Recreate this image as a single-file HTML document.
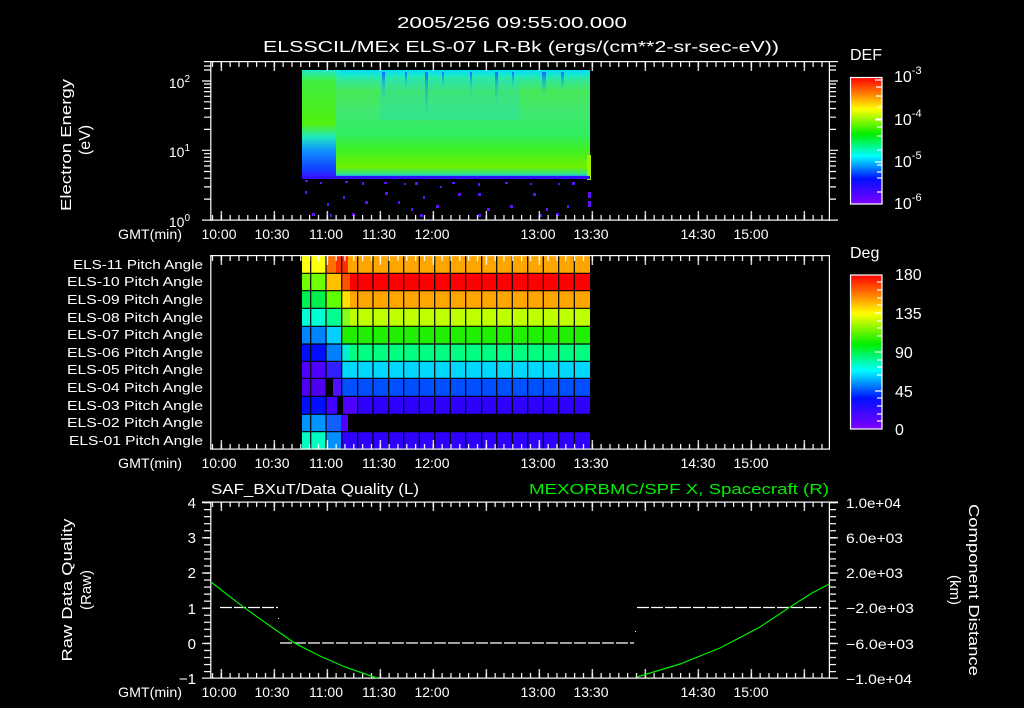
<!DOCTYPE html>
<html><head><meta charset="utf-8"><style>
html,body{margin:0;padding:0;background:#000;}
svg{display:block;}
text{font-family:"Liberation Sans",sans-serif;fill:#fff;}
</style></head><body>
<svg width="1024" height="708" viewBox="0 0 1024 708" xmlns="http://www.w3.org/2000/svg">
<defs>
<pattern id="tminT" patternUnits="userSpaceOnUse" x="220.7" y="0" width="8.8333" height="708"><rect x="0" y="0" width="1.2" height="708" fill="#fff"/></pattern>
<pattern id="tmajT" patternUnits="userSpaceOnUse" x="220.7" y="0" width="53" height="708"><rect x="0" y="0" width="1.2" height="708" fill="#fff"/></pattern>
<pattern id="yminP" patternUnits="userSpaceOnUse" x="0" y="502" width="1024" height="7.04"><rect x="0" y="0" width="1024" height="1.2" fill="#fff"/></pattern>
<pattern id="ymajP" patternUnits="userSpaceOnUse" x="0" y="502" width="1024" height="35.2"><rect x="0" y="0" width="1024" height="1.2" fill="#fff"/></pattern>
<linearGradient id="cbar" x1="0" y1="0" x2="0" y2="1">
<stop offset="0" stop-color="#ff0000"/><stop offset="0.13" stop-color="#ff8000"/><stop offset="0.25" stop-color="#ffff00"/><stop offset="0.45" stop-color="#00ee00"/><stop offset="0.62" stop-color="#00ffff"/><stop offset="0.8" stop-color="#0010ff"/><stop offset="1" stop-color="#8000ff"/></linearGradient>
<linearGradient id="specV" x1="0" y1="0" x2="0" y2="1">
<stop offset="0" stop-color="#10e8e8"/><stop offset="0.08" stop-color="#30e8a0"/><stop offset="0.2" stop-color="#48e858"/><stop offset="0.4" stop-color="#40e870"/><stop offset="0.6" stop-color="#30ee60"/><stop offset="0.75" stop-color="#40f020"/><stop offset="0.9" stop-color="#70f000"/><stop offset="0.96" stop-color="#30e880"/><stop offset="0.985" stop-color="#20a0ff"/><stop offset="1" stop-color="#3020ff"/></linearGradient>
<linearGradient id="specL" x1="0" y1="0" x2="0" y2="1">
<stop offset="0" stop-color="#20e8d0"/><stop offset="0.1" stop-color="#40ee40"/><stop offset="0.5" stop-color="#50f010"/><stop offset="0.62" stop-color="#20e8c0"/><stop offset="0.75" stop-color="#1090ff"/><stop offset="0.92" stop-color="#1040ff"/><stop offset="1" stop-color="#4010ff"/></linearGradient>
<linearGradient id="streak" x1="0" y1="0" x2="0" y2="1"><stop offset="0" stop-color="#1040ff" stop-opacity="0.7"/><stop offset="1" stop-color="#10c0ff" stop-opacity="0"/></linearGradient>
<linearGradient id="cyanS" x1="0" y1="0" x2="0" y2="1"><stop offset="0" stop-color="#00d0ff" stop-opacity="0.7"/><stop offset="1" stop-color="#00ffd0" stop-opacity="0"/></linearGradient>
</defs>

<text x="512" y="28" font-size="16" text-anchor="middle" textLength="230" lengthAdjust="spacingAndGlyphs">2005/256 09:55:00.000</text>
<text x="521" y="52" font-size="16" text-anchor="middle" textLength="516" lengthAdjust="spacingAndGlyphs">ELSSCIL/MEx ELS-07 LR-Bk  (ergs/(cm**2-sr-sec-eV))</text>

<!-- Panel 1 -->
<rect x="302" y="70" width="288" height="108" fill="url(#specV)"/>
<rect x="302" y="70" width="34" height="108" fill="url(#specL)"/>
<rect x="340" y="70" width="250" height="10" fill="url(#cyanS)"/>
<g fill="url(#streak)">
<rect x="425" y="72" width="3" height="50"/><rect x="495" y="72" width="3" height="35"/><rect x="470" y="72" width="2" height="25"/><rect x="382" y="72" width="3" height="30"/><rect x="405" y="72" width="2" height="20"/><rect x="542" y="72" width="4" height="25"/><rect x="561" y="72" width="3" height="20"/><rect x="442" y="72" width="2" height="18"/><rect x="512" y="72" width="2" height="18"/>
</g>
<rect x="380" y="80" width="140" height="40" fill="#20d8e0" opacity="0.25"/>
<rect x="587" y="155" width="4" height="25" fill="#a0f000"/>
<rect x="302" y="176" width="288" height="3" fill="#3010ff"/>
<g fill="#6010ff">
<rect x="305" y="180" width="3" height="2"/><rect x="320" y="182" width="2" height="2"/><rect x="345" y="181" width="3" height="2"/><rect x="362" y="182" width="2" height="3"/><rect x="384" y="182" width="3" height="2"/><rect x="404" y="183" width="2" height="2"/><rect x="415" y="182" width="3" height="3"/><rect x="440" y="186" width="2" height="2"/><rect x="452" y="182" width="3" height="2"/><rect x="478" y="183" width="2" height="3"/><rect x="505" y="182" width="3" height="2"/><rect x="530" y="183" width="2" height="2"/><rect x="558" y="183" width="2" height="2"/><rect x="572" y="182" width="3" height="3"/>
<rect x="305" y="191" width="2" height="3"/><rect x="327" y="203" width="2" height="3"/><rect x="343" y="196" width="2" height="3"/><rect x="365" y="201" width="3" height="3"/><rect x="385" y="192" width="3" height="3"/><rect x="398" y="201" width="2" height="3"/><rect x="411" y="208" width="2" height="3"/><rect x="423" y="196" width="2" height="3"/><rect x="436" y="205" width="3" height="3"/><rect x="458" y="193" width="3" height="3"/><rect x="478" y="193" width="3" height="3"/><rect x="487" y="208" width="3" height="3"/><rect x="510" y="205" width="3" height="3"/><rect x="533" y="193" width="3" height="3"/><rect x="546" y="208" width="2" height="3"/><rect x="567" y="205" width="2" height="3"/><rect x="588" y="192" width="3" height="6"/><rect x="588" y="201" width="3" height="6"/>
<rect x="312" y="213" width="3" height="3"/><rect x="330" y="214" width="2" height="3"/><rect x="352" y="213" width="3" height="3"/><rect x="420" y="214" width="3" height="3"/><rect x="478" y="214" width="3" height="3"/><rect x="540" y="214" width="2" height="3"/><rect x="556" y="213" width="3" height="3"/>
</g>
<rect x="204" y="61" width="634" height="1.2" fill="#fff"/>
<rect x="202" y="219.5" width="636" height="1.2" fill="#fff"/>
<rect x="210.2" y="61" width="1.2" height="160" fill="#fff"/>
<rect x="828.8" y="61" width="1.2" height="160" fill="#fff"/>
<rect x="211" y="62" width="618" height="5" fill="url(#tminT)"/>
<rect x="211" y="62" width="618" height="9" fill="url(#tmajT)"/>
<rect x="211" y="215" width="618" height="5" fill="url(#tminT)"/>
<rect x="211" y="211" width="618" height="9" fill="url(#tmajT)"/>
<g stroke="#fff" stroke-width="1.2">
<path d="M202 81H211M202 150.3H211M829 81H838M829 150.3H838"/>
<path d="M204 199.1H211M204 186.9H211M204 178.2H211M204 171.5H211M204 166H211M204 161.3H211M204 157.3H211M204 153.7H211
M204 129.4H211M204 117.2H211M204 108.5H211M204 101.8H211M204 96.3H211M204 91.6H211M204 87.6H211M204 84H211
M204 70H211M204 66H211
M829 199.1H836M829 186.9H836M829 178.2H836M829 171.5H836M829 166H836M829 161.3H836M829 157.3H836M829 153.7H836
M829 129.4H836M829 117.2H836M829 108.5H836M829 101.8H836M829 96.3H836M829 91.6H836M829 87.6H836M829 84H836M829 70H836M829 66H836"/>
</g>
<text x="190" y="88" font-size="14" text-anchor="end">10<tspan dy="-6" font-size="10">2</tspan></text>
<text x="190" y="157" font-size="14" text-anchor="end">10<tspan dy="-6" font-size="10">1</tspan></text>
<text x="190" y="227" font-size="14" text-anchor="end">10<tspan dy="-6" font-size="10">0</tspan></text>
<text transform="translate(71,145) rotate(-90)" font-size="15" text-anchor="middle" textLength="132" lengthAdjust="spacingAndGlyphs">Electron Energy</text>
<text transform="translate(90,140) rotate(-90)" font-size="16" text-anchor="middle">(eV)</text>
<g font-size="14">
<text x="118" y="239" textLength="64" lengthAdjust="spacingAndGlyphs">GMT(min)</text>
<text x="219" y="239" text-anchor="middle">10:00</text><text x="272" y="239" text-anchor="middle">10:30</text><text x="326" y="239" text-anchor="middle">11:00</text><text x="379" y="239" text-anchor="middle">11:30</text><text x="432" y="239" text-anchor="middle">12:00</text><text x="538" y="239" text-anchor="middle">13:00</text><text x="591" y="239" text-anchor="middle">13:30</text><text x="698" y="239" text-anchor="middle">14:30</text><text x="751" y="239" text-anchor="middle">15:00</text>
</g>
<text x="850" y="60" font-size="16">DEF</text>
<rect x="850.5" y="77.5" width="31.5" height="126.5" fill="url(#cbar)" stroke="#fff" stroke-width="1.2"/>
<g stroke="#fff" stroke-width="1.2"><path d="M875 80H882M876 87H882M876 96H882M877 107H882M876 119H882M875 120H882M877 127H882M877 136H882M877 150H882M875 162H882M877 165H882M877 172H882M877 178H882M877 192H882"/></g>
<g font-size="16"><text x="894" y="82">10<tspan dy="-8" font-size="11">-3</tspan></text><text x="894" y="125">10<tspan dy="-8" font-size="11">-4</tspan></text><text x="894" y="167">10<tspan dy="-8" font-size="11">-5</tspan></text><text x="894" y="209">10<tspan dy="-8" font-size="11">-6</tspan></text></g>

<!-- Panel 2 -->
<g>
<rect x="302" y="256" width="24" height="17" fill="#ffff10"/><rect x="326" y="256" width="16" height="17" fill="#ff7000"/><rect x="342" y="256" width="248" height="17" fill="#ffa500"/><rect x="336" y="256" width="12" height="17" fill="#ff3000"/>
<rect x="302" y="273.5" width="24" height="17" fill="#70ff00"/><rect x="326" y="273.5" width="16" height="17" fill="#ffc000"/><rect x="342" y="273.5" width="248" height="17" fill="#ff0000"/><rect x="342" y="273.5" width="8" height="17" fill="#ff5000"/>
<rect x="302" y="291" width="24" height="17" fill="#00f050"/><rect x="326" y="291" width="16" height="17" fill="#60ff00"/><rect x="342" y="291" width="248" height="17" fill="#ffa500"/><rect x="342" y="291" width="8" height="17" fill="#ffe000"/>
<rect x="302" y="308.5" width="24" height="17.5" fill="#00ffd4"/><rect x="326" y="308.5" width="16" height="17.5" fill="#00ff90"/><rect x="342" y="308.5" width="248" height="17.5" fill="#c0ff00"/><rect x="342" y="308.5" width="8" height="17.5" fill="#80ff20"/>
<rect x="302" y="326.5" width="24" height="17.5" fill="#0084ff"/><rect x="326" y="326.5" width="16" height="17.5" fill="#00d0ff"/><rect x="342" y="326.5" width="248" height="17.5" fill="#20f000"/>
<rect x="302" y="344" width="24" height="17" fill="#0010ff"/><rect x="326" y="344" width="16" height="17" fill="#0080ff"/><rect x="342" y="344" width="248" height="17" fill="#00ff80"/><rect x="342" y="344" width="8" height="17" fill="#00f0d0"/>
<rect x="302" y="361.5" width="24" height="16.5" fill="#5000ff"/><rect x="326" y="361.5" width="16" height="16.5" fill="#3020ff"/><rect x="342" y="361.5" width="248" height="16.5" fill="#00d8ff"/>
<rect x="302" y="378.5" width="24.5" height="17.5" fill="#5000f0"/><rect x="333" y="378.5" width="9" height="17.5" fill="#5010ff"/><rect x="342" y="378.5" width="248" height="17.5" fill="#0050ff"/>
<rect x="302" y="396.5" width="24" height="17.5" fill="#0010ff"/><rect x="326" y="396.5" width="11" height="17.5" fill="#4000ff"/><rect x="343" y="396.5" width="247" height="17.5" fill="#3000ff"/><rect x="343" y="396.5" width="15" height="17.5" fill="#5000ff"/>
<rect x="302" y="414.5" width="24" height="17" fill="#0094ff"/><rect x="326" y="414.5" width="15" height="17" fill="#1060ff"/><rect x="341" y="414.5" width="7" height="17" fill="#5000ff"/>
<rect x="302" y="432" width="24" height="17" fill="#00ffc4"/><rect x="326" y="432" width="16" height="17" fill="#0090ff"/><rect x="342" y="432" width="248" height="17" fill="#3000ff"/>
</g>
<g stroke="#000" stroke-width="1.2">
<path d="M310.7 256V449M326 256V449M341.7 256V414M357.7 256V414M373 256V414M388.7 256V414M403.7 256V414M419.3 256V414M434.7 256V414M450.3 256V414M465.7 256V414M481.7 256V414M496.7 256V414M512.3 256V414M527.7 256V414M543.3 256V414M558.7 256V414M574.3 256V414M341.7 432V449M357.7 432V449M373 432V449M388.7 432V449M403.7 432V449M419.3 432V449M434.7 432V449M450.3 432V449M465.7 432V449M481.7 432V449M496.7 432V449M512.3 432V449M527.7 432V449M543.3 432V449M558.7 432V449M574.3 432V449"/>
<path d="M302 273.3H590M302 290.7H590M302 308.3H590M302 326.3H590M302 344H590M302 361.3H590M302 378.3H590M302 396.3H590M302 414.3H590M302 431.7H590"/>
</g>
<rect x="210.2" y="255" width="619.8" height="1.2" fill="#fff"/>
<rect x="210.2" y="448.5" width="619.8" height="1.2" fill="#fff"/>
<rect x="210.2" y="255" width="1.2" height="194.5" fill="#fff"/>
<rect x="828.8" y="255" width="1.2" height="194.5" fill="#fff"/>
<rect x="211" y="256" width="618" height="5" fill="url(#tminT)"/>
<rect x="211" y="256" width="618" height="9" fill="url(#tmajT)"/>
<rect x="211" y="444" width="618" height="5" fill="url(#tminT)"/>
<rect x="211" y="440" width="618" height="9" fill="url(#tmajT)"/>
<g font-size="13" text-anchor="end">
<text x="203" y="269" textLength="130" lengthAdjust="spacingAndGlyphs">ELS-11 Pitch Angle</text>
<text x="203" y="286" textLength="136" lengthAdjust="spacingAndGlyphs">ELS-10 Pitch Angle</text>
<text x="203" y="304" textLength="136" lengthAdjust="spacingAndGlyphs">ELS-09 Pitch Angle</text>
<text x="203" y="322" textLength="136" lengthAdjust="spacingAndGlyphs">ELS-08 Pitch Angle</text>
<text x="203" y="339" textLength="136" lengthAdjust="spacingAndGlyphs">ELS-07 Pitch Angle</text>
<text x="203" y="357" textLength="136" lengthAdjust="spacingAndGlyphs">ELS-06 Pitch Angle</text>
<text x="203" y="374" textLength="136" lengthAdjust="spacingAndGlyphs">ELS-05 Pitch Angle</text>
<text x="203" y="392" textLength="136" lengthAdjust="spacingAndGlyphs">ELS-04 Pitch Angle</text>
<text x="203" y="410" textLength="136" lengthAdjust="spacingAndGlyphs">ELS-03 Pitch Angle</text>
<text x="203" y="427" textLength="136" lengthAdjust="spacingAndGlyphs">ELS-02 Pitch Angle</text>
<text x="203" y="445" textLength="134" lengthAdjust="spacingAndGlyphs">ELS-01 Pitch Angle</text>
</g>
<g font-size="14">
<text x="118" y="468" textLength="64" lengthAdjust="spacingAndGlyphs">GMT(min)</text>
<text x="219" y="468" text-anchor="middle">10:00</text><text x="272" y="468" text-anchor="middle">10:30</text><text x="326" y="468" text-anchor="middle">11:00</text><text x="379" y="468" text-anchor="middle">11:30</text><text x="432" y="468" text-anchor="middle">12:00</text><text x="538" y="468" text-anchor="middle">13:00</text><text x="591" y="468" text-anchor="middle">13:30</text><text x="698" y="468" text-anchor="middle">14:30</text><text x="751" y="468" text-anchor="middle">15:00</text>
</g>
<text x="850" y="258" font-size="16">Deg</text>
<rect x="850.5" y="275" width="31.5" height="154" fill="url(#cbar)" stroke="#fff" stroke-width="1.2"/>
<g stroke="#fff" stroke-width="1.2"><path d="M877 282H882M877 290H882M877 298H882M877 305H882M875 313H882M877 321H882M877 328H882M877 336H882M875 352H882M877 360H882M877 367H882M877 375H882M875 391H882M877 398H882M877 406H882M877 414H882M877 421H882"/></g>
<g font-size="16"><text x="895" y="280">180</text><text x="895" y="319">135</text><text x="895" y="358">90</text><text x="895" y="397">45</text><text x="895" y="435">0</text></g>

<!-- Panel 3 -->
<text x="211" y="494" font-size="15" textLength="208" lengthAdjust="spacingAndGlyphs">SAF_BXuT/Data Quality (L)</text>
<text x="829" y="494" font-size="15" text-anchor="end" style="fill:#00ee00" textLength="300" lengthAdjust="spacingAndGlyphs">MEXORBMC/SPF X, Spacecraft (R)</text>
<rect x="202" y="501.5" width="636" height="1.2" fill="#fff"/>
<rect x="202" y="677.5" width="636" height="1.2" fill="#fff"/>
<rect x="210.2" y="501.5" width="1.2" height="177" fill="#fff"/>
<rect x="828.8" y="501.5" width="1.2" height="177" fill="#fff"/>
<rect x="211" y="502" width="618" height="5" fill="url(#tminT)"/>
<rect x="211" y="502" width="618" height="9" fill="url(#tmajT)"/>
<rect x="211" y="673" width="618" height="5" fill="url(#tminT)"/>
<rect x="211" y="669" width="618" height="9" fill="url(#tmajT)"/>
<rect x="204" y="502" width="7" height="176" fill="url(#yminP)"/>
<rect x="202" y="502" width="9" height="176" fill="url(#ymajP)"/>
<rect x="829" y="502" width="7" height="176" fill="url(#yminP)"/>
<rect x="829" y="502" width="9" height="176" fill="url(#ymajP)"/>
<g stroke="#fff" stroke-width="1.2" stroke-dasharray="12 2" fill="none">
<path d="M220 607.5H278"/><path d="M280 643H634"/><path d="M637 607.5H821"/>
</g>
<rect x="278" y="618" width="1" height="1" fill="#fff"/><rect x="635" y="631" width="1" height="1" fill="#fff"/>
<path d="M211 582 L243 606.7 L270 626 L295 643.3 L320 656 L345 667 L377 678" stroke="#00ee00" stroke-width="1.2" fill="none"/>
<path d="M637 677 L680 664 L720 648 L760 627 L790 607 L812 593 L829.3 584" stroke="#00ee00" stroke-width="1.2" fill="none"/>
<g font-size="15" text-anchor="end">
<text x="196" y="508">4</text><text x="196" y="543">3</text><text x="196" y="578">2</text><text x="196" y="614">1</text><text x="196" y="649">0</text><text x="196" y="684">−1</text>
</g>
<g font-size="14">
<text x="846" y="508" textLength="55" lengthAdjust="spacingAndGlyphs">1.0e+04</text>
<text x="846" y="543" textLength="57" lengthAdjust="spacingAndGlyphs">6.0e+03</text>
<text x="846" y="578" textLength="57" lengthAdjust="spacingAndGlyphs">2.0e+03</text>
<text x="846" y="613" textLength="68" lengthAdjust="spacingAndGlyphs">−2.0e+03</text>
<text x="846" y="649" textLength="68" lengthAdjust="spacingAndGlyphs">−6.0e+03</text>
<text x="846" y="684" textLength="66" lengthAdjust="spacingAndGlyphs">−1.0e+04</text>
</g>
<text transform="translate(72,590) rotate(-90)" font-size="15" text-anchor="middle" textLength="143" lengthAdjust="spacingAndGlyphs">Raw Data Quality</text>
<text transform="translate(91,590) rotate(-90)" font-size="15" text-anchor="middle">(Raw)</text>
<text transform="translate(969,590) rotate(90)" font-size="15" text-anchor="middle" textLength="172" lengthAdjust="spacingAndGlyphs">Component Distance</text>
<text transform="translate(950,590) rotate(90)" font-size="15" text-anchor="middle">(km)</text>
<g font-size="14">
<text x="118" y="697" textLength="64" lengthAdjust="spacingAndGlyphs">GMT(min)</text>
<text x="219" y="697" text-anchor="middle">10:00</text><text x="272" y="697" text-anchor="middle">10:30</text><text x="326" y="697" text-anchor="middle">11:00</text><text x="379" y="697" text-anchor="middle">11:30</text><text x="432" y="697" text-anchor="middle">12:00</text><text x="538" y="697" text-anchor="middle">13:00</text><text x="591" y="697" text-anchor="middle">13:30</text><text x="698" y="697" text-anchor="middle">14:30</text><text x="751" y="697" text-anchor="middle">15:00</text>
</g>
</svg>
</body></html>
